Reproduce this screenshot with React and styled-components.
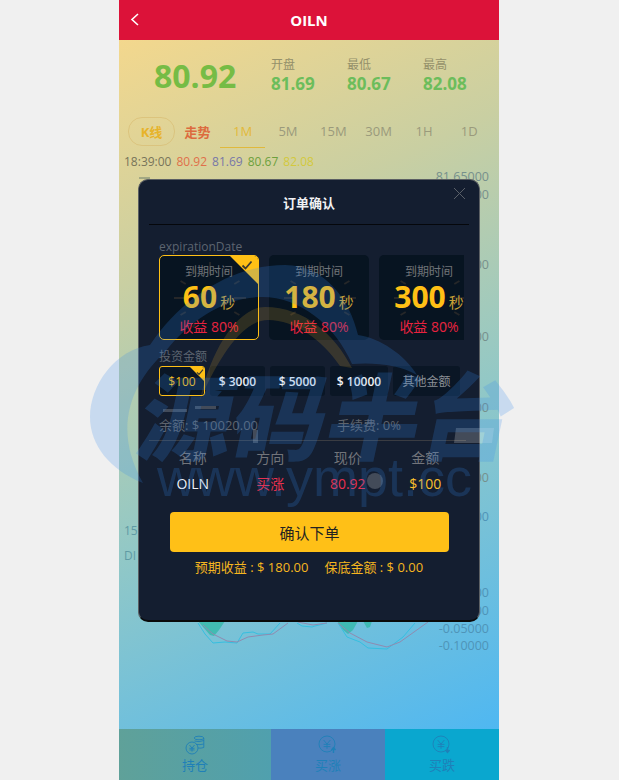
import React from 'react';
import styled, { createGlobalStyle } from 'styled-components';

const FONT = '"Open Sans", "Noto Sans CJK SC", sans-serif';

const GlobalStyle = createGlobalStyle`
  html, body {
    margin: 0;
    padding: 0;
    background: #f0f0f0;
    font-family: ${FONT};
    overflow: hidden;
  }
  * { box-sizing: border-box; }
`;

const Page = styled.div`
  position: relative;
  width: 380px;
  height: 780px;
  margin-left: 119px;
  display: flex;
  flex-direction: column;
  background: linear-gradient(155deg, #fad98a 0%, #c9cfa2 30%, #92c8c6 58%, #45b5f8 100%);
`;

const Header = styled.div`
  position: relative;
  flex: 0 0 40px;
  display: flex;
  align-items: center;
  justify-content: center;
  background: #dc1239;
  color: #fff;
  font-size: 15px;
  font-weight: 700;
`;

const BackIcon = styled.svg`
  position: absolute;
  left: 10px;
  top: 12px;
  width: 12px;
  height: 15px;
`;

const Stats = styled.div`
  flex: 0 0 72px;
  display: flex;
  align-items: center;
  padding-left: 35px;
`;

const Price = styled.div`
  width: 117px;
  color: #76bc45;
  font-size: 32px;
  font-weight: 700;
  line-height: 40px;
`;

const Stat = styled.div`
  width: 76px;
`;

const StatLabel = styled.div`
  color: #94906a;
  font-size: 12px;
  line-height: 16px;
`;

const StatValue = styled.div`
  color: #6cbd5b;
  font-size: 17px;
  font-weight: 700;
  line-height: 22px;
`;

const Tabs = styled.div`
  flex: 0 0 36px;
  display: flex;
  align-items: stretch;
  padding: 5px 7px 0 9px;
`;

const Pill = styled.div`
  width: 47px;
  height: 29px;
  display: flex;
  align-items: center;
  justify-content: center;
  border: 1px solid rgba(215, 185, 110, 0.6);
  border-radius: 14px;
  color: #e7b32a;
  font-size: 13px;
  font-weight: 700;
`;

const TrendTab = styled.div`
  width: 45px;
  height: 29px;
  display: flex;
  align-items: center;
  justify-content: center;
  color: #dc6b3e;
  font-size: 13px;
  font-weight: 700;
`;

const Tab = styled.div`
  flex: 1;
  height: 31px;
  display: flex;
  align-items: center;
  justify-content: center;
  color: ${(p) => (p.$active ? '#e3b93a' : '#9a9a7c')};
  border-bottom: 1px solid ${(p) => (p.$active ? '#e0b93c' : 'transparent')};
  font-size: 13px;
  padding-bottom: 2px;
`;

const Legend = styled.div`
  flex: 0 0 26px;
  display: flex;
  gap: 5px;
  align-items: center;
  padding: 0 0 0 5px;
  font-size: 12px;
`;

const LegendItem = styled.span`
  color: ${(p) => p.$color};
`;

const Chart = styled.div`
  position: relative;
  flex: 1;
`;

const ChartLines = styled.svg`
  position: absolute;
  left: 0;
  top: 0;
  width: 380px;
  height: 555px;
`;

const AxisLabel = styled.span`
  position: absolute;
  right: 10px;
  top: ${(p) => p.$y - 174 - 8}px;
  color: ${(p) => (p.$y > 500 ? '#4f94b8' : '#76908c')};
  font-size: 12.5px;
  line-height: 16px;
`;

const SideLabel = styled.span`
  position: absolute;
  left: 5px;
  top: ${(p) => p.$y - 174 - 8}px;
  color: #5f9aa4;
  font-size: 12px;
  line-height: 16px;
`;

const Footer = styled.div`
  flex: 0 0 51px;
  display: flex;
`;

const FooterButton = styled.div`
  flex: ${(p) => p.$grow} 0 0;
  display: flex;
  flex-direction: column;
  align-items: center;
  padding-top: 6px;
  background: ${(p) => p.$bg};
  color: #1f80b8;
  font-size: 13px;
  line-height: 16px;
`;

const FooterIcon = styled.svg`
  width: 20px;
  height: 20px;
  margin-bottom: 2px;
`;

const Modal = styled.div`
  position: absolute;
  left: 19px;
  top: 179px;
  width: 342px;
  height: 443px;
  background: #141e30;
  border: 1px solid #5b5f63;
  border-bottom: 2px solid #0a0a0a;
  border-radius: 10px;
`;

const ModalTitle = styled.div`
  height: 45px;
  margin: 0 10px;
  display: flex;
  align-items: center;
  justify-content: center;
  border-bottom: 1px solid #05070b;
  color: #f1f2f4;
  font-size: 13px;
  font-weight: 700;
`;

const CloseIcon = styled.svg`
  position: absolute;
  right: 13px;
  top: 7px;
  width: 13px;
  height: 13px;
`;

const SectionLabel = styled.div`
  margin: ${(p) => p.$top}px 0 0 20px;
  color: #5d6570;
  font-size: 12px;
  line-height: 16px;
`;

const TileRow = styled.div`
  width: 305px;
  height: 85px;
  margin-left: 20px;
  display: flex;
  gap: 10px;
  overflow: hidden;
`;

const Tile = styled.div`
  position: relative;
  flex: 0 0 100px;
  height: 85px;
  display: flex;
  flex-direction: column;
  align-items: center;
  padding-top: 8px;
  background: #071421;
  border: 1px solid ${(p) => (p.$active ? '#ffc015' : 'transparent')};
  border-radius: 5px;
  overflow: hidden;
`;

const TileClock = styled.svg`
  position: absolute;
  left: 10px;
  top: 2px;
  width: 80px;
  height: 80px;
`;

const TileCaption = styled.div`
  position: relative;
  color: #6f7378;
  font-size: 12px;
  line-height: 16px;
`;

const TileTime = styled.div`
  position: relative;
  display: flex;
  align-items: baseline;
  gap: 3px;
  height: 36px;
  margin-top: -1px;
  color: #ffc015;
  font-size: 30px;
  font-weight: 700;
  line-height: 36px;
`;

const TileUnit = styled.span`
  color: #c9a136;
  font-size: 15px;
  font-weight: 400;
  line-height: 15px;
`;

const TileRate = styled.div`
  position: relative;
  margin-top: 3px;
  color: #e8223f;
  font-size: 14px;
  line-height: 18px;
`;

const Corner = styled.div`
  position: absolute;
  right: 0;
  top: 0;
  width: ${(p) => p.$size}px;
  height: ${(p) => p.$size}px;
  background: #ffc015;
  clip-path: polygon(0 0, 100% 0, 100% 100%);
`;

const CornerCheck = styled.svg`
  position: absolute;
  right: ${(p) => p.$right}px;
  top: ${(p) => p.$top}px;
  width: ${(p) => p.$size}px;
  height: ${(p) => p.$size}px;
`;

const AmountRow = styled.div`
  margin: 1px 0 0 20px;
  display: flex;
  gap: 5px;
`;

const Amount = styled.div`
  position: relative;
  width: ${(p) => p.$width}px;
  height: 30px;
  display: flex;
  align-items: center;
  justify-content: center;
  background: #0a1625;
  border: 1px solid ${(p) => (p.$active ? '#ffc015' : 'transparent')};
  border-radius: 3px;
  overflow: hidden;
  color: ${(p) => (p.$active ? '#ffc015' : p.$muted ? '#8b8f95' : '#f2f3f5')};
  font-size: 12px;
  font-weight: ${(p) => (p.$active || p.$muted ? 400 : 600)};
`;

const BalanceRow = styled.div`
  margin: 21px 0 0 20px;
  display: flex;
  color: #5f646d;
  font-size: 13px;
  line-height: 16px;
`;

const BalanceCell = styled.div`
  width: 178px;
`;

const Divider = styled.div`
  height: 1px;
  margin: 7px 13px 0 10px;
  background: #3a3c42;
`;

const OrderGrid = styled.div`
  margin: 8px 0 0 15px;
  width: 310px;
  display: grid;
  grid-template-columns: repeat(4, 1fr);
  grid-template-rows: 18px 26px;
  align-items: center;
  justify-items: center;
  row-gap: 4px;
`;

const GridHead = styled.div`
  color: #72747a;
  font-size: 14px;
  line-height: 18px;
`;

const GridCell = styled.div`
  color: ${(p) => p.$color};
  font-size: 14px;
  line-height: 20px;
`;

const ConfirmButton = styled.button`
  display: flex;
  align-items: center;
  justify-content: center;
  width: 279px;
  height: 40px;
  margin: 15px 0 0 31px;
  background: #ffc017;
  border: 0;
  border-radius: 4px;
  color: #222;
  font-family: ${FONT};
  font-size: 15px;
`;

const Forecast = styled.div`
  margin-top: 6px;
  display: flex;
  justify-content: center;
  gap: 16px;
  color: #f6b61f;
  font-size: 13px;
  line-height: 18px;
`;

const Watermark = styled.div`
  position: absolute;
  left: -119px;
  top: 0;
  width: 619px;
  height: 780px;
  pointer-events: none;
`;

const WatermarkArt = styled.svg`
  position: absolute;
  left: 0;
  top: 0;
  width: 619px;
  height: 780px;
`;

const WatermarkTitle = styled.div`
  position: absolute;
  left: 142px;
  top: 352px;
  color: rgba(53, 135, 238, 0.21);
  font-family: "Noto Sans CJK SC", sans-serif;
  font-size: 94px;
  font-weight: 900;
  line-height: 120px;
  white-space: nowrap;
  transform: skewX(-12deg);
`;

const WatermarkUrl = styled.div`
  position: absolute;
  left: 157px;
  top: 447px;
  color: rgba(53, 135, 238, 0.21);
  font-family: "Liberation Sans", sans-serif;
  font-size: 54px;
  line-height: 60px;
  white-space: nowrap;
`;

const axis = [
  [177, '81.65000'],
  [195, '81.60000'],
  [265, '81.40000'],
  [337, '81.20000'],
  [408, '81.00000'],
  [478, '80.80000'],
  [517, '80.70000'],
  [593, '0.10000'],
  [611, '0.00000'],
  [629, '-0.05000'],
  [646, '-0.10000'],
];

const tabs = ['1M', '5M', '15M', '30M', '1H', '1D'];
const tiles = ['60', '180', '300'];
const clockTicks = [0, 30, 60, 90, 120, 150, 210, 240, 270, 300, 330];

function Check({ size, right, top }) {
  return (
    <CornerCheck $size={size} $right={right} $top={top} viewBox="0 0 12 12" fill="none">
      <path d="M1.5 6.5 L4.5 9.5 L10.5 2.5" stroke="#3b3a30" strokeWidth="1.8" />
    </CornerCheck>
  );
}

function Yen({ cx, cy, r }) {
  return (
    <g stroke="#1f80b8" fill="none" strokeWidth="0.9">
      <circle cx={cx} cy={cy} r={r} />
      <path
        d={`M${cx - r * 0.42} ${cy - r * 0.5} L${cx} ${cy} L${cx + r * 0.42} ${cy - r * 0.5}
            M${cx} ${cy} V${cy + r * 0.6}
            M${cx - r * 0.42} ${cy + r * 0.05} H${cx + r * 0.42}
            M${cx - r * 0.42} ${cy + r * 0.32} H${cx + r * 0.42}`}
      />
    </g>
  );
}

function App() {
  return (
    <>
      <GlobalStyle />
      <Page>
        <Header>
          <BackIcon viewBox="0 0 12 15" fill="none">
            <path d="M9 2 L3 7.5 L9 13" stroke="#fff" strokeWidth="1.6" />
          </BackIcon>
          OILN
        </Header>

        <Stats>
          <Price>80.92</Price>
          <Stat>
            <StatLabel>开盘</StatLabel>
            <StatValue>81.69</StatValue>
          </Stat>
          <Stat>
            <StatLabel>最低</StatLabel>
            <StatValue>80.67</StatValue>
          </Stat>
          <Stat>
            <StatLabel>最高</StatLabel>
            <StatValue>82.08</StatValue>
          </Stat>
        </Stats>

        <Tabs>
          <Pill>K线</Pill>
          <TrendTab>走势</TrendTab>
          {tabs.map((t, i) => (
            <Tab key={t} $active={i === 0}>{t}</Tab>
          ))}
        </Tabs>

        <Legend>
          <LegendItem $color="#77745a">18:39:00</LegendItem>
          <LegendItem $color="#e0704a">80.92</LegendItem>
          <LegendItem $color="#7878a8">81.69</LegendItem>
          <LegendItem $color="#6da03c">80.67</LegendItem>
          <LegendItem $color="#d3c93d">82.08</LegendItem>
        </Legend>

        <Chart>
          <ChartLines viewBox="119 174 380 555" fill="none">
            <path d="M139 178 H150" stroke="#6d7f6c" />
            <path
              d="M198 621 L203 627 L210 635 L214 636 L219 630 L225 621 Z M337 621 L343 630 L348 634 L353 630 L358 621 Z M363 621 L367 628 L370 627 L372 621 Z"
              fill="#2fb8a6"
              fillOpacity="0.75"
            />
            <g stroke="#35bfe0" strokeLinejoin="round">
              <path d="M198 623 L205 634 L213 643 L225 642 L237 643 L243 633 L253 632 L258 634 L270 634 L280 623" />
              <path d="M297 623 L302 626 L312 627 L315 626 L327 623" />
              <path d="M338 623 L347 637 L360 642 L368 648 L387 649 L403 637 L415 623" />
            </g>
            <g stroke="#8f8bb0" strokeLinejoin="round">
              <path d="M203 625 L213 634 L227 641 L237 642 L248 637 L263 635 L273 634 L288 623" />
              <path d="M298 622 L313 625 L327 623" />
              <path d="M338 623 L350 633 L367 642 L387 647 L400 642 L428 622" />
            </g>
          </ChartLines>
          {axis.map(([y, text]) => (
            <AxisLabel key={y} $y={y}>{text}</AxisLabel>
          ))}
          <SideLabel $y={531}>15</SideLabel>
          <SideLabel $y={556}>DI</SideLabel>
        </Chart>

        <Footer>
          <FooterButton $grow={152} $bg="linear-gradient(90deg, #5fa199, #50a0ae)">
            <FooterIcon viewBox="0 0 20 20" fill="none">
              <Yen cx={7} cy={13} r={6} />
              <g stroke="#1f80b8" strokeWidth="0.9">
                <ellipse cx="14" cy="3" rx="4.8" ry="1.8" />
                <path d="M9.5 6 Q14 7.5 18.8 5.5 M11 9.5 Q15 10 18.8 9 M13 13 Q16 13.5 18.8 12.5 M18.8 3 V12.5" />
              </g>
            </FooterIcon>
            持仓
          </FooterButton>
          <FooterButton $grow={114} $bg="#4a81bd">
            <FooterIcon viewBox="0 0 20 20" fill="none">
              <Yen cx={9} cy={9} r={8} />
              <path d="M15.5 18 V13 M13.5 15 L15.5 12.5 L17.5 15" stroke="#1f80b8" strokeWidth="1.4" />
            </FooterIcon>
            买涨
          </FooterButton>
          <FooterButton $grow={114} $bg="#0aa7cf">
            <FooterIcon viewBox="0 0 20 20" fill="none">
              <Yen cx={9} cy={9} r={8} />
              <path d="M15.5 12 V17 M13.5 15 L15.5 17.5 L17.5 15" stroke="#1f80b8" strokeWidth="1.4" />
            </FooterIcon>
            买跌
          </FooterButton>
        </Footer>

        <Modal>
          <ModalTitle>订单确认</ModalTitle>
          <CloseIcon viewBox="0 0 13 13" fill="none">
            <path d="M1 1 L12 12 M12 1 L1 12" stroke="#5a6068" strokeWidth="1" />
          </CloseIcon>

          <SectionLabel $top={14}>expirationDate</SectionLabel>
          <TileRow>
            {tiles.map((t, i) => (
              <Tile key={t} $active={i === 0}>
                <TileClock viewBox="0 0 80 80">
                  {clockTicks.map((a) => (
                    <path
                      key={a}
                      d={a % 90 === 0 ? 'M40 4 V16' : 'M40 6 V12'}
                      stroke="#262729"
                      strokeWidth="2"
                      transform={`rotate(${a} 40 40)`}
                    />
                  ))}
                </TileClock>
                <TileCaption>到期时间</TileCaption>
                <TileTime>
                  {t}
                  <TileUnit>秒</TileUnit>
                </TileTime>
                <TileRate>收益 80%</TileRate>
                {i === 0 && (
                  <>
                    <Corner $size={28} />
                    <Check size={12} right={5} top={3} />
                  </>
                )}
              </Tile>
            ))}
          </TileRow>

          <SectionLabel $top={9}>投资金额</SectionLabel>
          <AmountRow>
            <Amount $width={46} $active>
              $100
              <Corner $size={14} />
              <Check size={8} right={0} top={1} />
            </Amount>
            <Amount $width={55}>$ 3000</Amount>
            <Amount $width={55}>$ 5000</Amount>
            <Amount $width={58}>$ 10000</Amount>
            <Amount $width={67} $muted>其他金额</Amount>
          </AmountRow>

          <BalanceRow>
            <BalanceCell>余额: $ 10020.00</BalanceCell>
            <div>手续费: 0%</div>
          </BalanceRow>
          <Divider />

          <OrderGrid>
            <GridHead>名称</GridHead>
            <GridHead>方向</GridHead>
            <GridHead>现价</GridHead>
            <GridHead>金额</GridHead>
            <GridCell $color="#f2f3f7">OILN</GridCell>
            <GridCell $color="#e8304f">买涨</GridCell>
            <GridCell $color="#e8304f">80.92</GridCell>
            <GridCell $color="#fbc02d">$100</GridCell>
          </OrderGrid>

          <ConfirmButton>确认下单</ConfirmButton>
          <Forecast>
            <span>预期收益 : $ 180.00</span>
            <span>保底金额 : $ 0.00</span>
          </Forecast>
        </Modal>

        <Watermark>
          <WatermarkArt viewBox="0 0 619 780">
            <path
              d="M143 483 C110 470 90 445 90 417 C90 385 115 350 150 345 C180 300 230 265 285 265 C325 265 350 300 358 335 C380 338 405 355 417 375 C400 365 375 362 352 364 C335 325 300 297 262 297 C225 297 190 320 165 352 C135 380 110 425 143 483 Z"
              fill="rgba(53, 135, 238, 0.21)"
            />
            <path
              d="M200 400 C212 345 240 307 265 307 C305 307 335 335 352 368 L340 366 C322 340 295 320 268 320 C245 320 222 350 200 400 Z"
              fill="rgba(240, 180, 40, 0.17)"
            />
            <g fill="rgba(255, 255, 255, 0.2)">
              <rect x="163" y="409" width="24" height="3" />
              <rect x="195" y="406" width="21" height="3" />
              <rect x="253" y="430" width="5" height="13" />
              <circle cx="375" cy="481" r="8" />
              <polygon points="456,428 494,428 492,443 454,443" />
            </g>
          </WatermarkArt>
          <WatermarkTitle>源码半台</WatermarkTitle>
          <WatermarkUrl>www.ympt.cc</WatermarkUrl>
        </Watermark>
      </Page>
    </>
  );
}

export default App;
